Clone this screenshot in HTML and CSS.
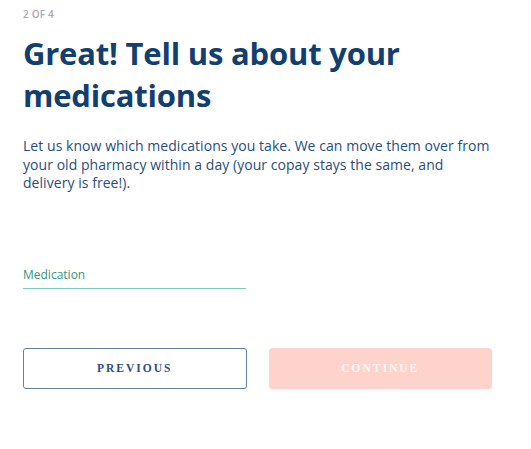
FILE: index.html
```html
<!DOCTYPE html>
<html lang="en">
<head>
<meta charset="utf-8">
<title>Medications</title>
<link rel="stylesheet" href="styles.css">
</head>
<body>
<main class="step">
  <div class="eyebrow">2 OF 4</div>
  <h1 class="title">Great! Tell us about your medications</h1>
  <p class="lead">Let us know which medications you take. We can move them over from your old pharmacy within a day (your copay stays the same, and delivery is free!).</p>
  <div class="field">
    <label class="field-label" for="med">Medication</label>
  </div>
  <div class="actions">
    <button class="btn btn-outline" type="button">Previous</button>
    <button class="btn btn-primary" type="button" disabled>Continue</button>
  </div>
</main>
</body>
</html>
```

FILE: styles.css
```css
html, body {
  margin: 0;
  padding: 0;
  background: #ffffff;
}

.step {
  width: 469px;
  padding: 8px 0 0 23px;
  font-family: "Open Sans", Lato, sans-serif;
}

.eyebrow {
  font-size: 10px;
  line-height: 12px;
  font-weight: 600;
  letter-spacing: 0.2px;
  color: #a3aab9;
}

.title {
  margin: 12px 0 0;
  font-size: 31px;
  line-height: 42px;
  font-weight: 700;
  letter-spacing: -0.2px;
  color: #123f6f;
}

.lead {
  margin: 21px 0 0;
  font-size: 14px;
  line-height: 18.5px;
  letter-spacing: 0.05px;
  color: #2a4d7d;
}

.field {
  margin-top: 74px;
  width: 223px;
  padding-bottom: 5px;
  border-bottom: 1.5px solid #7ccbbd;
}

.field-label {
  display: block;
  font-size: 12px;
  line-height: 16px;
  font-weight: 500;
  color: #359681;
}

.actions {
  margin-top: 59px;
  display: flex;
  gap: 22px;
}

.btn {
  flex: 1;
  height: 41px;
  border-radius: 3px;
  font-family: "Liberation Serif", "DejaVu Serif", serif;
  font-size: 11.5px;
  font-weight: 700;
  letter-spacing: 2px;
  text-transform: uppercase;
  cursor: pointer;
}

.btn-outline {
  background: #ffffff;
  border: 1px solid #5e7fa6;
  color: #2b4f80;
}

.btn-primary {
  background: #fdd3cc;
  border: 1px solid #fdd3cc;
  color: #fff4f1;
}
```
